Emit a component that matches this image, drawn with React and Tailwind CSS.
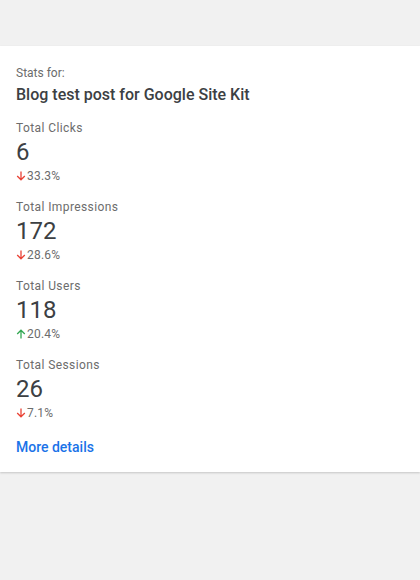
const stats = [
  { label: 'Total Clicks', value: '6', change: '33.3%', up: false },
  { label: 'Total Impressions', value: '172', change: '28.6%', up: false },
  { label: 'Total Users', value: '118', change: '20.4%', up: true },
  { label: 'Total Sessions', value: '26', change: '7.1%', up: false },
];

const Arrow = ({ up }) => (
  <svg width="10" height="10" viewBox="0 0 10 10" className={up ? 'text-[#34a853]' : 'text-[#ea4335]'}>
    {up ? (
      <path d="M5 9.5V1.2M1.2 5L5 1.2L8.8 5" stroke="currentColor" strokeWidth="1.3" fill="none" />
    ) : (
      <path d="M5 0.5v8.3M1.2 5L5 8.8L8.8 5" stroke="currentColor" strokeWidth="1.3" fill="none" />
    )}
  </svg>
);

const App = () => {
  return (
    <div className="min-h-[580px] bg-[#f1f1f1] pt-[46px] font-['Roboto',sans-serif]">
      <div className="bg-white shadow-[0_1px_2px_rgba(0,0,0,0.18)] px-4 pt-[19px] pb-[15px]">
        <div className="text-[12px] leading-[16px] text-[#6c6c6c]">Stats for:</div>
        <div className="mt-[3px] text-[16px] leading-[22px] font-medium text-[#3c4043]">
          Blog test post for Google Site Kit
        </div>
        <div className="mt-[14px] flex flex-col gap-[15px]">
          {stats.map((s) => (
            <div key={s.label}>
              <div className="text-[12px] leading-[16px] tracking-[0.4px] text-[#6c6c6c]">{s.label}</div>
              <div className="mt-[1px] text-[24px] leading-[31px] text-[#3c4043]">{s.value}</div>
              <div className="flex items-center gap-[1px] text-[12px] leading-[16px] tracking-[0.2px] text-[#6c6c6c]">
                <Arrow up={s.up} />
                {s.change}
              </div>
            </div>
          ))}
        </div>
        <div className="mt-[16px] text-[14px] leading-[20px] font-medium text-[#1a73e8]">More details</div>
      </div>
    </div>
  );
};

export default App;
